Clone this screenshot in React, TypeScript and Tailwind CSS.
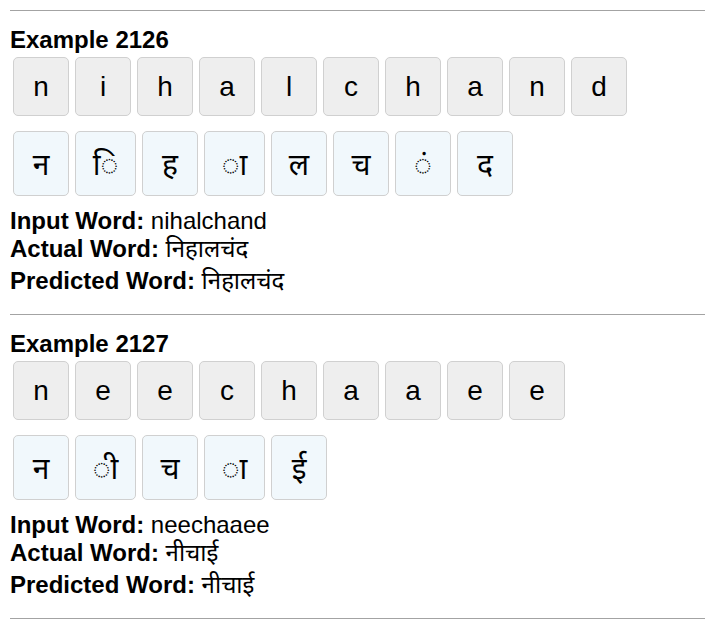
import React from "react";

interface Example {
  id: number;
  input: string[];
  output: string[];
  inputWord: string;
  actualWord: string;
  predictedWord: string;
}

const examples: Example[] = [
  {
    id: 2126,
    input: ["n", "i", "h", "a", "l", "c", "h", "a", "n", "d"],
    output: ["न", "ि", "ह", "ा", "ल", "च", "ं", "द"],
    inputWord: "nihalchand",
    actualWord: "निहालचंद",
    predictedWord: "निहालचंद",
  },
  {
    id: 2127,
    input: ["n", "e", "e", "c", "h", "a", "a", "e", "e"],
    output: ["न", "ी", "च", "ा", "ई"],
    inputWord: "neechaaee",
    actualWord: "नीचाई",
    predictedWord: "नीचाई",
  },
];

// vowel signs drawn on a dotted circle come out a bit wider
const wideMarks = ["ि", "ी", "ा"];

const font = { fontFamily: '"Liberation Sans", Arial, "Noto Sans", sans-serif' };

const ExampleBlock: React.FC<{ ex: Example }> = ({ ex }) => (
  <div>
    <div className="h-px bg-[#a3a3a3]" />
    <h3 className="mt-[15px] text-[24px] leading-[28px] font-bold text-black">
      Example {ex.id}
    </h3>

    {/* input characters */}
    <div className="flex gap-[6px] mt-[3px] ml-[3px]">
      {ex.input.map((c, i) => (
        <span
          key={i}
          className="w-[56px] h-[59px] flex items-center justify-center bg-[#eeeeee] border border-[#d0d0d0] rounded-[5px] text-[28px] text-black"
        >
          {c}
        </span>
      ))}
    </div>

    {/* output characters */}
    <div className="flex gap-[6px] mt-[15px] ml-[3px]">
      {ex.output.map((c, i) => (
        <span
          key={i}
          className={`${
            wideMarks.includes(c) ? "w-[61px]" : "w-[56px]"
          } h-[65px] pt-[2px] flex items-center justify-center bg-[#f1f8fc] border border-[#d0d0d0] rounded-[5px] text-[30px] text-black`}
        >
          {c}
        </span>
      ))}
    </div>

    {/* words */}
    <div className="mt-[11px] text-[24px] text-black">
      <div className="h-[28px] leading-[28px] whitespace-nowrap">
        <b>Input Word:</b> {ex.inputWord}
      </div>
      <div className="h-[32px] leading-[28px] whitespace-nowrap">
        <b>Actual Word:</b> {ex.actualWord}
      </div>
      <div className="h-[28px] leading-[28px] whitespace-nowrap">
        <b>Predicted Word:</b> {ex.predictedWord}
      </div>
    </div>
    <div className="h-[19px]" />
  </div>
);

export default function App() {
  return (
    <div className="bg-white min-h-screen pt-[10px] pl-[10px] overflow-hidden" style={font}>
      {examples.map((ex) => (
        <ExampleBlock key={ex.id} ex={ex} />
      ))}
      <div className="h-px bg-[#a3a3a3]" />
    </div>
  );
}
